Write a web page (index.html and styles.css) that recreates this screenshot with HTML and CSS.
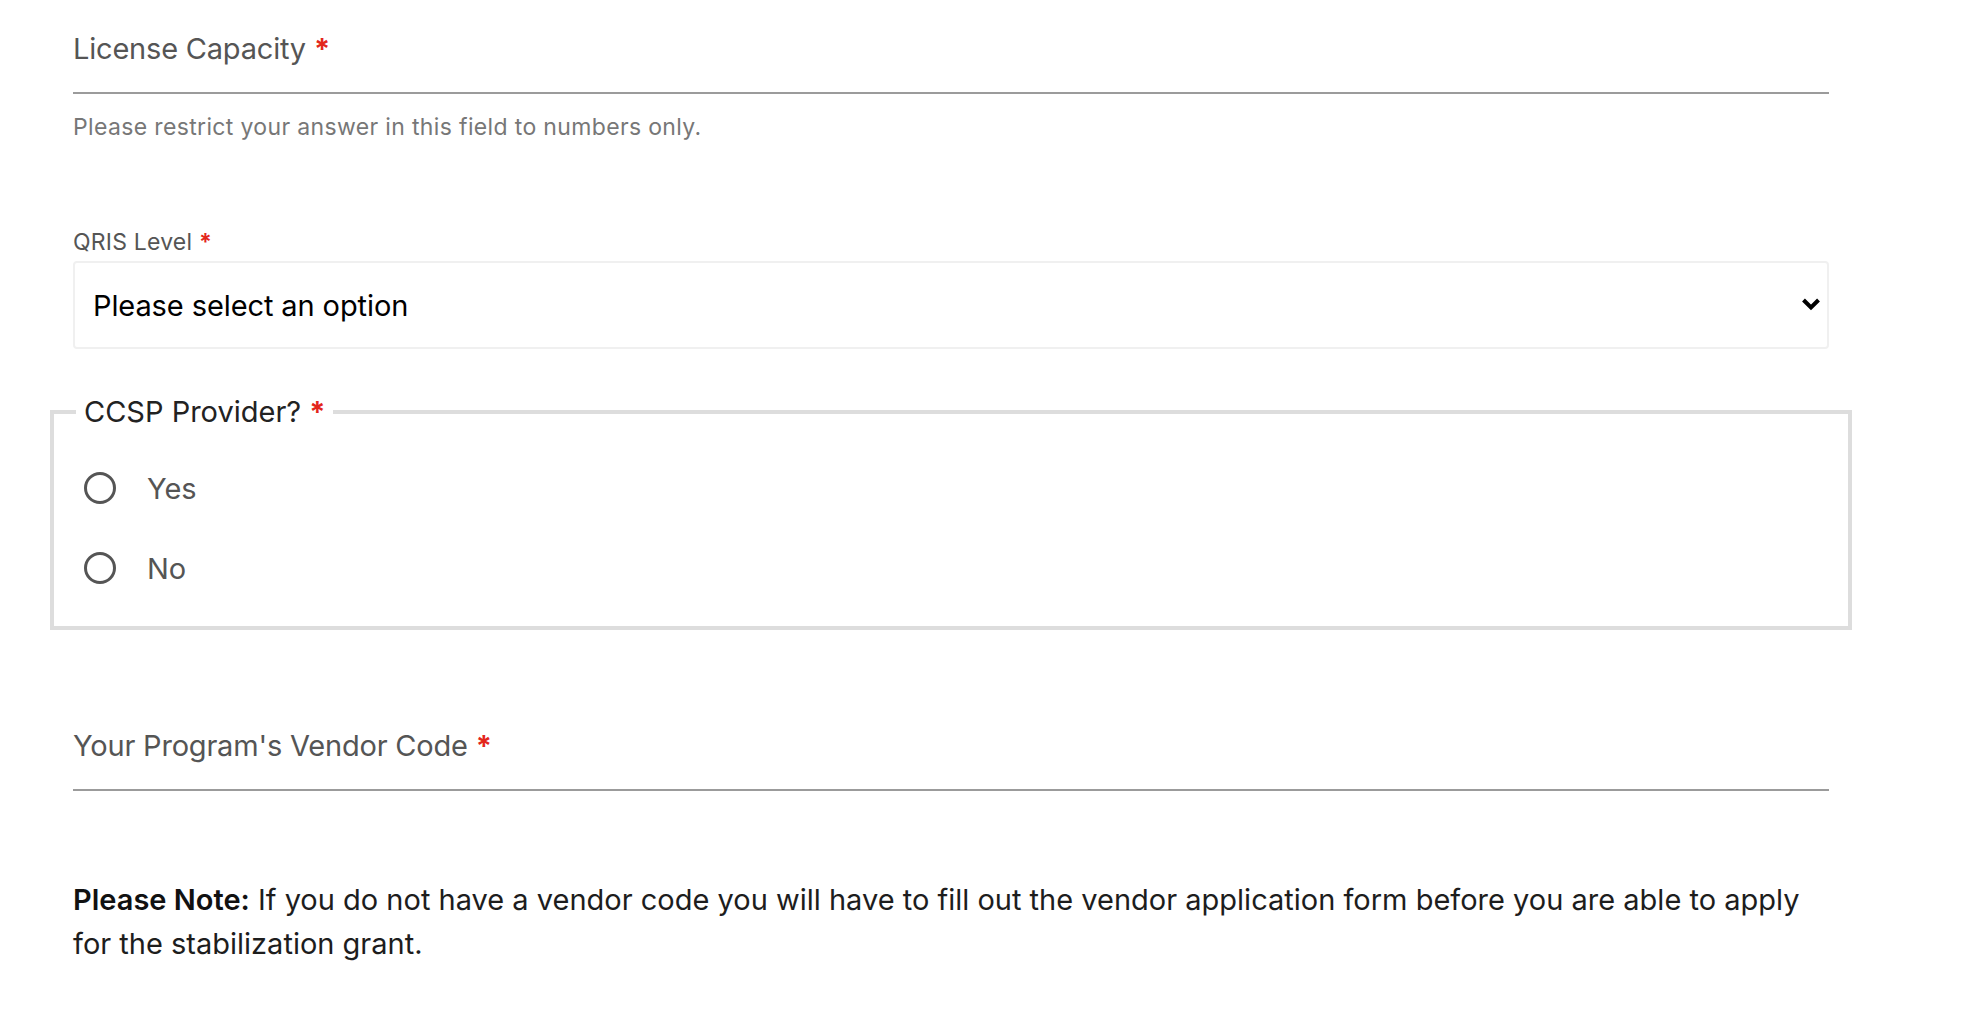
FILE: index.html
```html
<!DOCTYPE html>
<html lang="en">
<head>
<meta charset="utf-8">
<title>Form</title>
<link rel="stylesheet" href="styles.css">
</head>
<body>
<form class="form">
  <div class="text-field">
    <label class="float-label">License Capacity <span class="req">*</span></label>
  </div>
  <p class="help">Please restrict your answer in this field to numbers only.</p>

  <div class="select-field">
    <label class="small-label">QRIS Level <span class="req">*</span></label>
    <div class="select-box">
      <span class="select-value">Please select an option</span>
      <svg class="chevron" width="20" height="14" viewBox="0 0 20 14" aria-hidden="true">
        <polyline points="2.5,3 10,10.5 17.5,3" fill="none" stroke="#000" stroke-width="4"/>
      </svg>
    </div>
  </div>

  <fieldset class="radio-group">
    <legend>CCSP Provider? <span class="req">*</span></legend>
    <div class="radio-row"><span class="radio"></span><span class="radio-text">Yes</span></div>
    <div class="radio-row"><span class="radio"></span><span class="radio-text">No</span></div>
  </fieldset>

  <div class="text-field vendor">
    <label class="float-label">Your Program's Vendor Code <span class="req">*</span></label>
  </div>

  <p class="note"><strong>Please Note:</strong> If you do not have a vendor code you will have to fill out the vendor application form before you are able to apply for the stabilization grant.</p>
</form>
</body>
</html>
```

FILE: styles.css
```css
html, body {
  margin: 0;
  padding: 0;
  background: #ffffff;
}

body {
  font-family: Inter, "Noto Sans", "Liberation Sans", sans-serif;
  color: #222;
}

.form {
  width: 1756px;
  margin-left: 73px;
  padding-top: 31px;
}

.text-field {
  border-bottom: 2px solid #9b9b9b;
  padding-bottom: 25px;
}

.float-label {
  display: block;
  font-size: 29px;
  line-height: 36px;
  color: #555;
  letter-spacing: -0.2px;
}

.req {
  color: #e3261b;
  font-weight: 700;
}

.help {
  margin: 19px 0 0;
  font-size: 23px;
  line-height: 28px;
  color: #777;
  letter-spacing: 0.35px;
}

.select-field {
  margin-top: 87px;
}

.small-label {
  display: block;
  font-size: 23px;
  line-height: 28px;
  color: #555;
  letter-spacing: 0.2px;
}

.select-box {
  margin-top: 5px;
  height: 84px;
  border: 2px solid #f0f0f0;
  border-radius: 4px;
  display: flex;
  align-items: center;
  justify-content: space-between;
  padding: 0 6px 0 18px;
}

.select-value {
  font-size: 29px;
  color: #000;
  letter-spacing: -0.1px;
}

.chevron {
  display: block;
  margin-top: -2px;
}

.radio-group {
  margin: 46px -23px 0;
  border: 4px solid #ddd;
  padding: 17px 30px 18px;
  min-width: 0;
}

.radio-group legend {
  padding: 0 7px 0 8px;
  margin-left: -8px;
  font-size: 29px;
  line-height: 34px;
  color: #222;
}

.radio-row {
  display: flex;
  align-items: center;
  height: 80px;
}

.radio-row:first-of-type {
  margin-top: 2px;
}

.radio {
  width: 26px;
  height: 26px;
  border: 3px solid #555;
  border-radius: 50%;
  flex: none;
}

.radio-text {
  margin-left: 31px;
  font-size: 29px;
  color: #555;
}

.vendor {
  margin-top: 98px;
}

.note {
  margin: 87px 0 0;
  font-size: 29px;
  line-height: 44px;
  color: #1d1d1d;
}

.note strong {
  font-weight: 600;
  color: #111;
}
```
